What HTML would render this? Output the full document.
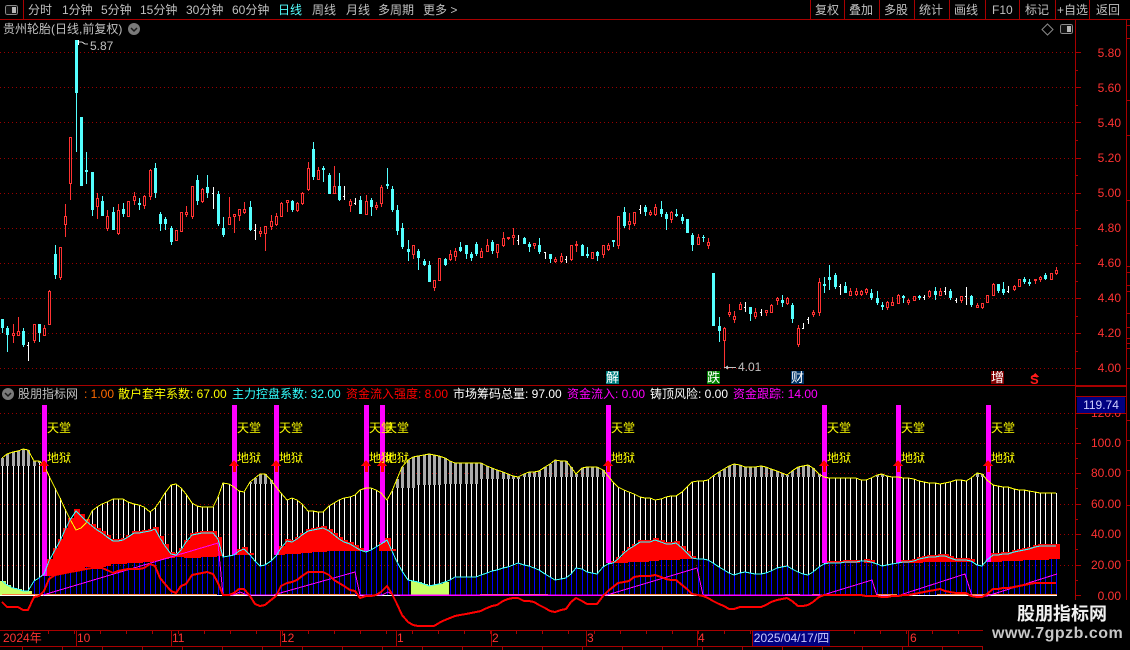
<!DOCTYPE html>
<html lang="zh"><head><meta charset="utf-8"><title>股朋指标网</title>
<style>
html,body{margin:0;padding:0;background:#000;width:1130px;height:650px;overflow:hidden}
#w{position:relative;width:1130px;height:650px;overflow:hidden;background:#000;font:12px/14px "Liberation Sans","WenQuanYi Zen Hei","Noto Sans CJK SC",sans-serif;color:#c0c0c0}
#w svg{position:absolute;left:0;top:0}
.t{position:absolute;white-space:nowrap}
.tb{top:3px}
.ax{position:absolute;right:9px;color:#ff3232;white-space:nowrap}
.y{color:#ff0;position:absolute;white-space:nowrap}
.tm{position:absolute;top:631px;color:#ff3232;white-space:nowrap}
.sg{position:absolute;top:371px;width:13px;height:13px;line-height:13px;font-size:13px;color:#fff;text-align:center;overflow:hidden}
</style></head><body><div id="w">
<svg id="s" width="1130" height="650" viewBox="0 0 1130 650" shape-rendering="crispEdges" xmlns="http://www.w3.org/2000/svg"></svg>

<span class="t tb" style="left:28px">分时</span><span class="t tb" style="left:62px">1分钟</span><span class="t tb" style="left:101px">5分钟</span><span class="t tb" style="left:140px">15分钟</span><span class="t tb" style="left:186px">30分钟</span><span class="t tb" style="left:232px">60分钟</span><span class="t tb" style="left:278px;color:#55ffff">日线</span><span class="t tb" style="left:312px">周线</span><span class="t tb" style="left:346px">月线</span><span class="t tb" style="left:378px">多周期</span><span class="t tb" style="left:423px">更多 &gt;</span>
<span class="t tb" style="left:815px">复权</span><span class="t tb" style="left:849px">叠加</span><span class="t tb" style="left:884px">多股</span><span class="t tb" style="left:919px">统计</span><span class="t tb" style="left:954px">画线</span><span class="t tb" style="left:992px">F10</span><span class="t tb" style="left:1025px">标记</span><span class="t tb" style="left:1057px">+自选</span><span class="t tb" style="left:1096px">返回</span>
<span class="t" style="left:3px;top:22px">贵州轮胎(日线,前复权)</span>
<span class="t" style="left:90px;top:39px">5.87</span>
<span class="t" style="left:738px;top:360px">4.01</span>

<span class="ax" style="top:46px">5.80</span><span class="ax" style="top:81px">5.60</span><span class="ax" style="top:116px">5.40</span><span class="ax" style="top:151px">5.20</span><span class="ax" style="top:186px">5.00</span><span class="ax" style="top:221px">4.80</span><span class="ax" style="top:256px">4.60</span><span class="ax" style="top:291px">4.40</span><span class="ax" style="top:326px">4.20</span><span class="ax" style="top:361px">4.00</span>

<span class="ax" style="top:406px">120.0</span>
<div class="t" style="left:1077px;top:397px;width:48px;height:16px;background:#000080;color:#d0d0ff;line-height:16px;text-align:center">119.74</div>
<span class="ax" style="top:436px">100.0</span><span class="ax" style="top:466px">80.00</span><span class="ax" style="top:497px">60.00</span><span class="ax" style="top:527px">40.00</span><span class="ax" style="top:558px">20.00</span><span class="ax" style="top:589px">0.00</span>

<div class="sg" style="left:606px;background:#008080">解</div>
<div class="sg" style="left:707px;background:#008000">跌</div>
<div class="sg" style="left:791px;background:#003366">财</div>
<div class="sg" style="left:991px;background:#800000">增</div>
<span class="t" style="left:1030px;top:373px;color:#ff1a1a;font-weight:bold;font-size:13px">S</span>

<span class="t" style="left:18px;top:387px">股朋指标网</span>
<span class="t" style="left:84px;top:387px;color:#ff6a00">: 1.00</span>
<span class="t" style="left:118px;top:387px;color:#ffff00">散户套牢系数: 67.00</span>
<span class="t" style="left:232px;top:387px;color:#33ffff">主力控盘系数: 32.00</span>
<span class="t" style="left:346px;top:387px;color:#ff0000">资金流入强度: 8.00</span>
<span class="t" style="left:453px;top:387px;color:#ffffff">市场筹码总量: 97.00</span>
<span class="t" style="left:567px;top:387px;color:#ff00ff">资金流入: 0.00</span>
<span class="t" style="left:650px;top:387px;color:#ffffff">铸顶风险: 0.00</span>
<span class="t" style="left:733px;top:387px;color:#ff00ff">资金跟踪: 14.00</span>

<span class="y" style="left:47px;top:421px">天堂</span><span class="y" style="left:47px;top:451px">地狱</span>
<span class="y" style="left:237px;top:421px">天堂</span><span class="y" style="left:237px;top:451px">地狱</span>
<span class="y" style="left:279px;top:421px">天堂</span><span class="y" style="left:279px;top:451px">地狱</span>
<span class="y" style="left:369px;top:421px">天堂</span><span class="y" style="left:369px;top:451px">地狱</span>
<span class="y" style="left:385px;top:421px">天堂</span><span class="y" style="left:385px;top:451px">地狱</span>
<span class="y" style="left:611px;top:421px">天堂</span><span class="y" style="left:611px;top:451px">地狱</span>
<span class="y" style="left:827px;top:421px">天堂</span><span class="y" style="left:827px;top:451px">地狱</span>
<span class="y" style="left:901px;top:421px">天堂</span><span class="y" style="left:901px;top:451px">地狱</span>
<span class="y" style="left:991px;top:421px">天堂</span><span class="y" style="left:991px;top:451px">地狱</span>

<div style="position:absolute;left:983px;top:600px;width:147px;height:50px;background:#000"></div>
<span class="t" style="left:1017px;top:604px;font-size:18px;line-height:20px;font-weight:bold;color:#f0f0f0">股朋指标网</span>
<span class="t" style="left:992px;top:625px;font-size:16px;line-height:18px;font-weight:bold;letter-spacing:.5px;color:#c8c8c8">www.7gpzb.com</span>

<span class="tm" style="left:3px">2024年</span><span class="tm" style="left:77px">10</span><span class="tm" style="left:172px">11</span><span class="tm" style="left:281px">12</span><span class="tm" style="left:397px">1</span><span class="tm" style="left:492px">2</span><span class="tm" style="left:587px">3</span><span class="tm" style="left:698px">4</span><span class="tm" style="left:910px">6</span>
<div class="t" style="left:753px;top:631px;width:77px;height:15px;line-height:15px;background:#000080;color:#c8c8ff;text-align:center">2025/04/17/四</div>

<script>
(function(){
var C=[[0,319,319,328,333],[0,326,328,335,352],[1,324,333,336,343],[1,317,331,336,336],[0,328,331,345,347],[2,342,345,345,361],[1,324,324,341,343],[0,324,324,333,342],[1,325,328,336,336],[1,290,291,325,325],[0,245,254,275,279],[1,247,247,278,280],[1,204,216,225,237],[1,137,137,184,200],[0,40,40,93,152],[0,117,117,186,186],[0,152,170,172,184],[0,172,172,210,216],[1,193,198,207,219],[0,196,201,216,216],[1,210,216,229,231],[0,207,212,230,230],[1,204,210,234,235],[0,203,209,214,217],[1,201,201,217,217],[1,192,196,201,205],[0,198,203,205,210],[1,195,196,206,209],[1,169,170,197,200],[0,163,168,193,198],[0,212,214,224,231],[0,217,219,224,230],[0,226,228,242,245],[1,230,230,241,241],[1,212,212,232,232],[1,206,212,215,217],[1,186,186,217,219],[0,175,180,201,205],[1,188,189,202,203],[0,175,187,193,198],[2,187,193,193,209],[0,191,194,224,226],[0,217,228,235,237],[1,197,217,225,225],[1,214,214,217,233],[1,209,209,216,221],
[1,202,209,213,214],[0,201,207,230,231],[2,224,230,230,240],[1,227,231,234,237],[1,226,226,234,251],[1,215,221,227,230],[1,213,216,225,226],[1,202,203,217,217],[1,200,200,203,212],[0,200,201,210,212],[1,202,203,211,212],[1,192,193,204,205],[1,162,168,190,191],[0,142,149,177,180],[1,167,170,180,180],[0,166,168,170,182],[0,173,175,194,194],[1,166,186,194,194],[0,173,186,200,201],[2,186,196,196,200],[1,199,201,206,212],[2,198,203,203,205],[0,196,200,214,214],[1,195,201,215,215],[0,198,200,207,216],[1,202,205,208,210],[1,185,187,204,207],[0,168,184,186,189],[0,186,189,210,212],[0,205,210,231,235],[0,223,228,247,249],[0,240,249,252,261],[1,245,245,255,259],[0,249,251,258,270],[0,259,261,265,266],[0,261,265,282,282],[1,280,280,288,291],[1,258,258,281,281],[0,258,259,265,266],[1,250,254,260,261],[1,248,251,257,261],[0,242,247,251,252],[0,245,245,254,259],[0,252,254,258,261],[0,242,244,254,256],
[1,248,251,258,258],[1,239,245,252,252],[0,240,242,251,254],[1,244,244,253,258],[1,232,238,246,247],[1,237,237,239,240],[1,228,235,238,245],[2,235,240,240,245],[0,237,238,244,244],[0,242,244,247,252],[1,243,243,246,249],[0,238,245,252,254],[2,252,252,252,259],[0,254,254,259,263],[1,257,259,262,263],[1,253,256,262,263],[2,256,259,259,263],[1,245,245,260,261],[1,241,244,246,252],[0,244,245,256,256],[0,247,254,256,258],[1,252,252,259,259],[0,251,252,256,261],[1,245,245,255,258],[1,243,245,250,251],[0,240,240,242,247],[1,216,216,246,249],[0,207,212,226,228],[1,213,221,225,230],[1,212,212,224,226],[2,205,209,209,214],[0,205,207,212,216],[1,210,212,215,216],[1,204,207,215,216],[0,201,209,214,217],[0,212,214,219,230],[1,211,212,220,223],[0,209,214,216,217],[0,214,217,221,224],[0,219,219,233,233],[0,233,235,245,251],[1,234,237,245,245],[0,235,237,238,242],[1,238,242,246,249],
[0,273,273,326,326],[0,317,326,331,342],[1,327,328,341,368],[1,304,312,315,317],[1,311,316,320,323],[1,302,304,310,310],[2,302,307,307,312],[0,307,307,314,321],[1,308,312,317,319],[2,309,312,312,316],[1,310,310,313,316],[1,304,305,313,313],[1,297,298,301,305],[0,295,300,303,307],[1,297,298,304,305],[0,303,305,319,323],[1,325,328,345,347],[2,323,328,328,329],[2,317,319,319,324],[1,310,312,315,317],[1,278,282,313,316],[0,277,284,286,293],[0,265,277,280,290],[0,273,275,287,289],[2,284,286,286,295],[0,282,286,293,293],[1,288,291,296,296],[1,288,291,295,296],[1,290,291,295,296],[1,288,289,293,295],[0,289,293,298,300],[0,291,298,303,305],[0,302,305,307,310],[1,301,302,308,310],[1,297,302,306,306],[1,294,295,304,304],[0,295,296,298,303],[1,299,300,303,305],[1,296,296,301,301],[0,295,296,298,300],[2,295,297,297,300],[1,290,291,297,298],[0,287,291,295,300],[1,288,291,296,296],[2,287,291,291,295],[0,289,291,298,300],[2,298,300,300,303],[1,296,296,301,303],[2,287,296,296,305],[0,295,296,305,307],[1,303,305,308,308],[1,303,303,308,309],[1,295,295,303,303],[1,283,284,296,296],[0,284,284,291,293],[0,282,289,293,295],[2,286,291,291,293],[1,285,286,290,291],[1,279,279,287,287],[0,277,279,282,284],[0,279,282,284,286],[1,279,279,280,284],[1,276,277,280,282],[0,273,275,279,280],[1,273,273,280,280],[1,267,270,274,275]];
var Y=[0,459,7,454,13,452,23,449,28,450,33,461,42,461,47,470,52,485,57,490,61,500,69,517,77,532,87,522,92,511,100,505,113,499,123,499,133,504,142,505,150,512,157,507,162,497,172,484,177,484,187,495,193,504,200,507,213,507,217,500,223,483,230,484,237,490,245,492,250,482,260,474,267,474,273,483,280,492,287,500,293,498,300,502,308,511,325,512,330,505,340,499,350,497,358,493,362,487,370,488,378,490,387,500,395,485,400,470,405,462,413,457,430,454,443,457,455,463,480,463,490,467,503,472,517,477,527,472,537,472,547,466,555,460,567,461,577,475,583,467,600,467,607,475,617,487,630,492,640,497,650,498,657,501,667,496,678,496,693,481,707,481,717,473,728,466,735,464,747,467,763,466,777,471,788,475,797,467,810,465,822,477,827,478,857,478,863,481,880,474,893,477,910,478,923,482,943,484,957,480,967,481,977,473,983,474,990,485,1007,487,1017,490,1033,491,1040,493,1057,493];
var K=[0,580,10,587,23,591,30,591,35,578,43,577,50,558,62,538,65,530,75,510,88,523,100,532,115,542,125,539,133,533,148,532,155,529,163,543,172,555,178,555,190,536,200,533,213,533,220,542,223,557,232,556,243,548,260,566,267,565,277,555,285,541,293,542,307,531,325,528,340,540,353,545,362,552,370,551,387,540,400,568,408,580,417,582,430,586,447,582,455,577,477,577,490,572,507,567,518,563,537,569,555,580,567,578,578,566,585,572,597,574,605,565,613,563,630,548,640,542,650,542,657,539,665,544,677,543,693,559,707,559,723,569,733,575,745,572,753,574,763,574,777,568,787,566,797,572,807,575,813,572,822,564,827,563,857,562,863,560,873,562,883,566,897,563,913,561,927,557,947,556,953,560,970,560,978,566,983,566,990,555,1007,554,1020,551,1040,546,1057,546];
var RS=[[47,576,67,573,87,567,100,567,115,564,133,563,157,561,173,557,190,558,213,557,222,555],[233,555,250,555],[277,555,290,554,320,552,333,551,362,551],[378,551,392,551],[613,563,640,562,667,560,693,559],[827,563,857,563],[862,563,913,563,927,562,947,562,972,562],[990,562,1013,561,1033,560,1060,559]];
var L=[2,602,7,607,18,607,23,610,28,610,33,597,42,596,50,577,55,575,100,567,105,569,112,573,123,570,132,569,143,569,152,563,157,568,160,578,170,590,175,594,180,587,187,583,192,575,200,574,205,572,212,573,217,580,222,595,232,595,238,589,247,589,253,603,260,606,267,604,277,595,283,582,290,583,297,580,307,572,325,572,337,582,350,590,355,591,360,598,367,596,378,595,387,586,395,598,400,612,405,620,415,626,435,626,442,621,448,619,457,615,472,613,480,611,488,607,495,606,507,599,517,598,525,601,533,601,543,607,553,612,567,609,572,600,577,597,587,604,598,604,603,596,617,583,627,582,637,575,648,577,657,574,663,579,677,580,692,594,703,596,720,604,730,610,740,607,763,607,773,601,787,598,800,607,810,605,820,596,823,595,850,595,877,596,882,597,897,596,920,593,940,589,953,593,967,593,973,597,983,597,993,589,1013,587,1037,583,1057,583];
var M="43,595 218,543 223,595 233,595 240,592 247,595 273,595 355,572 360,595 382,595 388,592 393,595 607,595 697,568 703,595 823,595 872,580 877,596 897,596 965,574 972,596 987,596 1057,574";
function f(p,x){if(x<=p[0])return p[1];for(var i=2;i<p.length;i+=2){if(x<=p[i]){return p[i-1]+(p[i+1]-p[i-1])*(x-p[i-2])/(p[i]-p[i-2]);}}return p[p.length-1];}
function R(x,y,w,h,c){return '<rect x="'+x+'" y="'+y+'" width="'+w+'" height="'+h+'" fill="'+c+'"/>';}
var h="",i,x;
var LC="#a80000",GC="#9a0000";
var gy=[52,87,122,158,193,228,263,298,333,368,413,443,473,504,534,565];
var gp="";gy.forEach(function(y){gp+="M0 "+(y+.5)+"H1075"});
h+='<path d="'+gp+'" stroke="'+GC+'" stroke-width="1" stroke-dasharray="1 3" fill="none"/>';
var wh="",bl="",gr="",rd="",lm="";
function gb(x){if(x<36)return 466;if(x<42)return 463;if(x<205)return 0;if(x<300)return 484;if(x<350)return 0;if(x<375)return 487;if(x<395)return 0;if(x<415)return 488;if(x<445)return 485;if(x<480)return 484;if(x<520)return 479;return 477;}
for(i=0;i<=200;i++){x=Math.floor(2.5+i*5.269);
 var yy=Math.round(f(Y,x)),ky=Math.round(f(K,x)),rb=0,s;
 for(s=0;s<RS.length;s++){var q=RS[s];if(x>=q[0]&&x<=q[q.length-2]){rb=Math.round(f(q,x));}}
 var hasRed=rb&&rb>ky-1;
 var topY=hasRed?ky-2:ky;
 wh+=R(x,yy,1,Math.max(0,topY-yy),"#fff");
 var g=gb(x);
 if(g&&yy<g)gr+=R(x-1,yy,3,g-yy,"#aaa");
 var bs=hasRed?rb:ky;
 bl+=R(x,bs,1,Math.max(0,595-bs),"#0000ff");
 if(hasRed)rd+=R(x-2,topY,6,rb-topY,"#f00");
 if(x<32||(x>=410&&x<=449))lm+=R(x-2,ky,6,595-ky,"#c8ff64");
}
h+=wh+gr+bl+rd+lm;
[[42,576],[232,555],[274,555],[364,551],[380,543],[606,563],[822,563],[896,563],[986,562]].forEach(function(b){h+=R(b[0],405,5,b[1]-405,"#f0f");});
[[0,400,"#fff"],[400,605,"#f0f"],[605,703,"#fff"],[703,823,"#f0f"],[823,1057,"#fff"]].forEach(function(b){h+=R(b[0],595,b[1]-b[0],1,b[2]);});
[[2,217],[233,247],[277,355],[480,548],[603,692],[785,800],[812,820],[877,897],[937,1057]].forEach(function(b){h+=R(b[0],594,b[1]-b[0],1,"#ff8040");});
function pl(p,a,b){var o=[],j,z;for(j=0;j<=200;j++){z=Math.floor(2.5+j*5.269);if(z>=a&&z<=b)o.push(z+","+Math.round(f(p,z)));}return o.join(" ");}
h+='<polyline points="'+pl(Y,0,1057)+'" fill="none" stroke="#ff0" stroke-width="1"/>';
h+='<polyline points="'+M+'" fill="none" stroke="#f0f" stroke-width="1"/>';
h+='<polyline points="'+pl(L,2,1057)+'" fill="none" stroke="#f00" stroke-width="2"/>';
h+='<polyline points="'+pl(K,0,1057)+'" fill="none" stroke="#33ffff" stroke-width="1"/>';
[44,234,276,366,382,608,824,898,988].forEach(function(c){h+='<path d="M'+c+' 460L'+(c+5)+' 466H'+(c+2)+'V472H'+(c-1)+'V466H'+(c-5)+'Z" fill="#f00"/>';});
for(i=0;i<C.length;i++){var c=C[i];x=Math.floor(2.5+i*5.269);
 if(c[0]==0){h+=R(x,c[1],1,c[4]-c[1],"#54ffff")+R(x-1,c[2],3,Math.max(1,c[3]-c[2]),"#54ffff");}
 else if(c[0]==1){h+=R(x,c[1],1,c[2]-c[1],"#ff3232")+R(x,c[3],1,c[4]-c[3],"#ff3232")+'<rect x="'+(x-.5)+'" y="'+(c[2]+.5)+'" width="2" height="'+Math.max(1,c[3]-c[2]-1)+'" fill="#000" stroke="#ff3232"/>';}
 else{h+=R(x,c[1],1,c[4]-c[1],"#fff")+R(x-1,c[2],1,1,"#fff");}
}
h+='<polyline points="79,42 82,42 85,44 88,44" fill="none" stroke="#c0c0c0"/>'+R(78,40,1,5,"#fff");
h+=R(724,367,12,1,"#c0c0c0")+'<path d="M724.5 367.5L728 365.5V369.5Z" fill="#c0c0c0"/>';
h+='<path d="M1035 373L1039 377H1031Z" fill="#ff1a1a"/>';
var fr=R(0,19,1130,1,LC)+R(23,0,1,19,LC);
[810,844,879,914,949,985,1019,1055,1089].forEach(function(v){fr+=R(v,0,1,19,LC);});
fr+=R(0,385,1075,1,LC)+R(1075,19,1,581,LC)+R(1126,19,1,581,LC)+R(1075,385,52,2,LC)+R(1076,396,50,1,LC)+R(1075,413,52,1,LC);
fr+=R(0,630,983,1,LC)+R(0,646,983,1,LC);
[76,171,280,396,491,586,697,752,908].forEach(function(v){fr+=R(v,631,1,15,LC);});
for(var t=22;t<983;t+=26){fr+=R(t,631,1,3,LC);}
for(var b=22;b<983;b+=40){fr+=R(b,646,1,4,LC);}
[52,87,122,158,193,228,263,298,333,368,443,473,504,534,565,595].forEach(function(y){fr+=R(1075,y,6,1,LC);});
[70,105,140,175,210,245,281,316,351,428,458,488,519,549,580].forEach(function(y){fr+=R(1075,y,3,1,LC);});
[25,38,100,135,200,266,272,285,291,313,327,338,343,348,368,420,440,470,505,560].forEach(function(y){fr+=R(1126,y,4,1,LC);});
h+=fr;
function pan(x,y){return '<rect x="'+(x+.5)+'" y="'+(y+.5)+'" width="12" height="9" rx="2" fill="#111" stroke="#8a8a8a"/>'+R(x+7,y+2,4,6,"#b8b8b8");}
h+=pan(5,5)+pan(1060,24);
h+='<path d="M1047.5 24L1053 29.5L1047.5 35L1042 29.5Z" fill="none" stroke="#8a8a8a" shape-rendering="auto"/>';
function chev(cx,cy){return '<circle cx="'+cx+'" cy="'+cy+'" r="6" fill="#7a7a7a" shape-rendering="auto"/><path d="M'+(cx-3)+' '+(cy-1)+'L'+cx+' '+(cy+2)+'L'+(cx+3)+' '+(cy-1)+'" fill="none" stroke="#1a1a1a" stroke-width="1.5" shape-rendering="auto"/>';}
h+=chev(134,29)+chev(8,394);
document.getElementById("s").innerHTML=h;
})();
</script>
</div></body></html>
